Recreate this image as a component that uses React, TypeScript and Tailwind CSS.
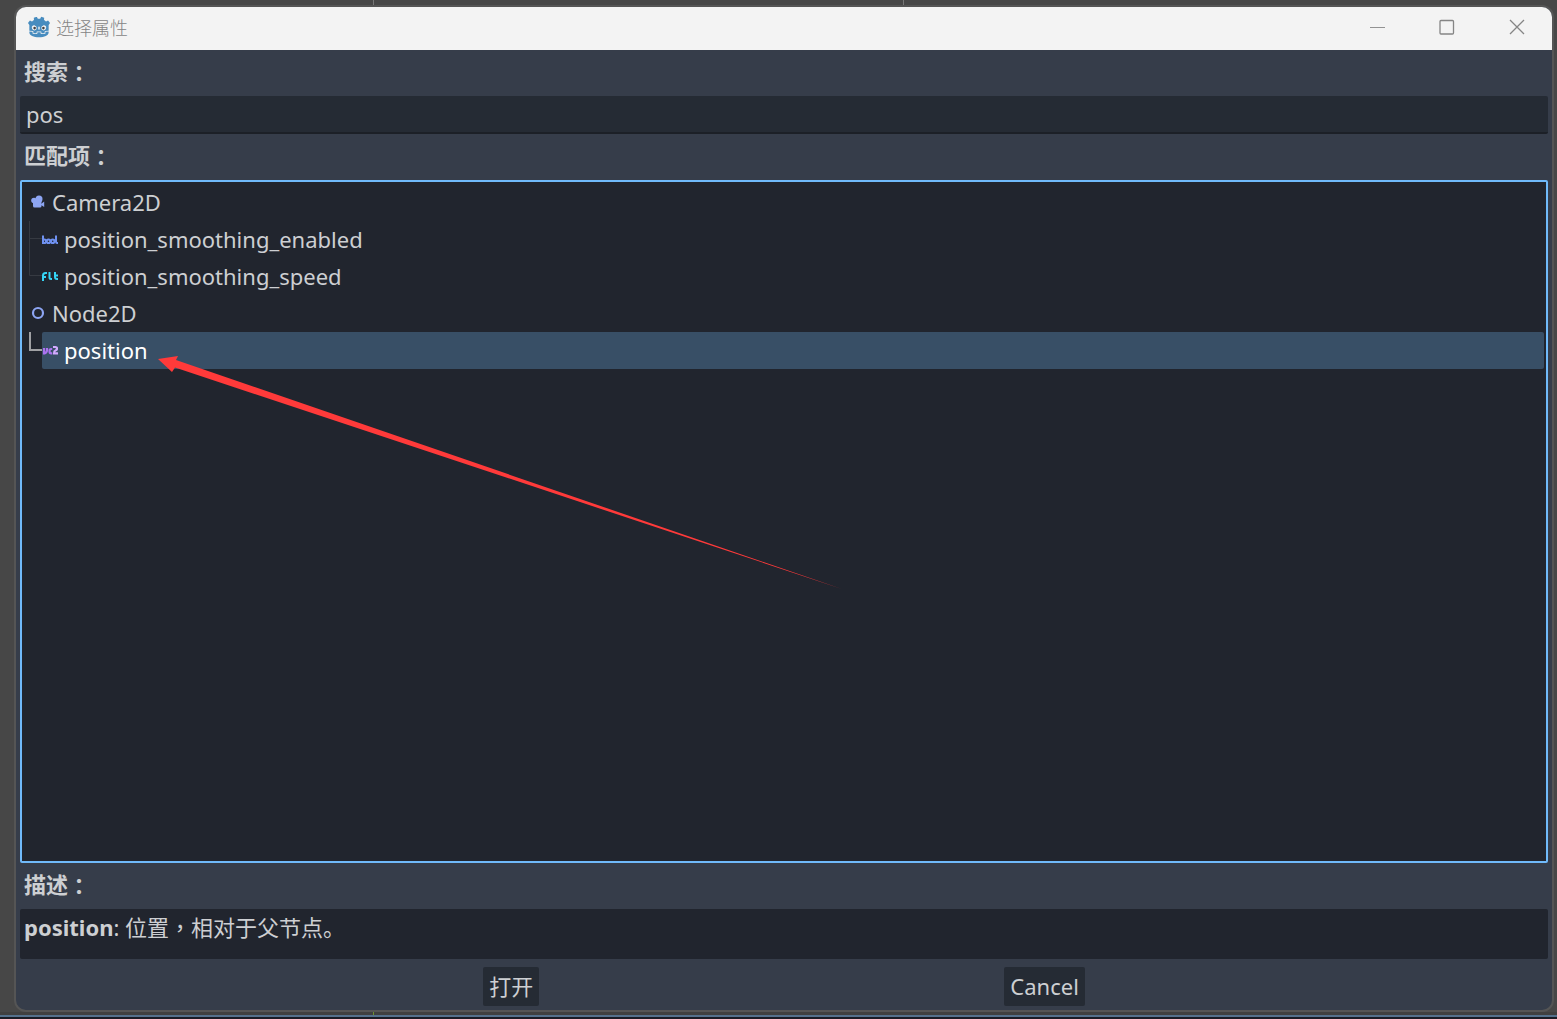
import { useState, type ReactNode } from "react";
import { SiGodotengine } from "react-icons/si";

function CameraIcon() {
  return (
    <svg width="16" height="16" viewBox="0 0 16 16" fill="#8da5f3" aria-hidden="true">
      <circle cx="9" cy="5" r="3.500" />
      <circle cx="4" cy="6.500" r="2.800" />
      <path d="M3 7h8.500v5q0 1.500-1.500 1.500H4.500Q3 13.500 3 12z" />
      <path d="M11 10l3.200-2.500v5.500L11 11z" />
    </svg>
  );
}

function Node2DIcon() {
  return (
    <svg width="16" height="16" viewBox="0 0 16 16" fill="none" stroke="#8da5f3" strokeWidth="2.200" aria-hidden="true">
      <circle cx="8" cy="8" r="5" />
    </svg>
  );
}

function BoolIcon() {
  return (
    <svg width="16" height="16" viewBox="0 0 16 16" fill="none" stroke="#6f91f0" strokeWidth="2" aria-hidden="true">
      <path d="M1 4.500V13M1 8.500h1.300a1.800 1.800 0 0 1 0 3.600H1" />
      <circle cx="6.500" cy="10.300" r="1.800" />
      <circle cx="10.700" cy="10.300" r="1.800" />
      <path d="M14 4.500V10.800q0 1.300 1.100 1.300H16" />
    </svg>
  );
}

function FloatIcon() {
  return (
    <svg width="16" height="16" viewBox="0 0 16 16" fill="none" stroke="#35d4f4" strokeWidth="2" aria-hidden="true">
      <path d="M5 5H3.500Q1 5 1 7.500V13M0 9h4" />
      <path d="M7.500 4v5.500Q7.500 11 9 11h1" />
      <path d="M13 4v5Q13 11 15 11h1M12 7.500h4" />
    </svg>
  );
}

function Vector2Icon() {
  return (
    <svg width="16" height="16" viewBox="0 0 16 16" fill="none" strokeWidth="2.200" aria-hidden="true">
      <path stroke="#ac73f1" d="M2 6v5.500h.5Q5 10.500 5 8V6M10.200 7H9.200Q7.500 7 7.500 9.200T9.200 11.400h1" />
      <path stroke="#d2aaff" d="M11 5h2.500Q15 5 15 6.500T13.500 8.500Q12 9 12 11.400h4" />
    </svg>
  );
}

function Label({ children, htmlFor }: { children: ReactNode; htmlFor?: string }) {
  return (
    <label htmlFor={htmlFor} className="flex h-[46px] shrink-0 items-center px-1 pb-1 font-bold">
      <span>{children}</span>
      <span className="font-['Noto_Sans_CJK_TC',sans-serif]">：</span>
    </label>
  );
}

function Item({ icon, name, child, selected }: { icon: ReactNode; name: string; child?: boolean; selected?: boolean }) {
  return (
    <button
      type="button"
      className={`flex h-[37px] w-full items-center gap-1.5 rounded-[2px] pb-0.5 text-left ${child ? "" : "pl-1.5"} ${
        selected ? "bg-[#384f66] text-white" : ""
      }`}
    >
      {icon}
      <span>{name}</span>
    </button>
  );
}

export default function App() {
  const [query, setQuery] = useState("pos");
  return (
    <div className="flex h-screen flex-col overflow-hidden bg-[#474747] font-['Noto_Sans','Noto_Sans_CJK_SC',sans-serif] text-[22px] leading-[30px] text-[#cdcfd2]">
      <div className="flex h-[5px] shrink-0">
        <div className="w-[374px] border-r border-[#777]" />
        <div className="w-[530px] border-r border-[#777]" />
      </div>
      <main className="relative mr-[3px] ml-3.5 flex min-h-0 flex-1 flex-col overflow-hidden rounded-xl border-2 border-[#555] bg-[#363d4a]">
        <header className="flex h-[43px] shrink-0 items-center bg-[#f3f3f3] pb-[3px] pl-3 text-[#858585]">
          <svg width="22" height="22" viewBox="0 0 24 24" aria-hidden="true">
            <path fill="#f3f3f3" d="M3 9h18v12H3z" />
            <SiGodotengine size={24} color="#478cbf" />
            <circle cx="7" cy="13.200" r="2.500" fill="#f3f3f3" />
            <circle cx="17" cy="13.200" r="2.500" fill="#f3f3f3" />
            <circle cx="7.200" cy="13.200" r="1.400" fill="#414042" />
            <circle cx="16.800" cy="13.200" r="1.400" fill="#414042" />
          </svg>
          <h1 className="ml-1.5 flex-1 font-['Noto_Sans_CJK_SC',sans-serif] text-lg leading-7 font-light">选择属性</h1>
          <button type="button" aria-label="最小化" className="flex h-full w-[70px] items-center justify-center">
            <svg width="16" height="16" stroke="#929292" aria-hidden="true"><path d="M1 8.500h15" /></svg>
          </button>
          <button type="button" aria-label="最大化" className="flex h-full w-[70px] items-center justify-center">
            <svg width="16" height="16" fill="none" stroke="#858585" strokeWidth="1.300" aria-hidden="true"><rect x="1" y="1.500" width="13.500" height="13.500" rx="1" /></svg>
          </button>
          <button type="button" aria-label="关闭" className="flex h-full w-[70px] items-center justify-center">
            <svg width="16" height="16" stroke="#858585" strokeWidth="1.300" aria-hidden="true"><path d="M1 1l14 14M15 1L1 15" /></svg>
          </button>
        </header>

        <div className="flex min-h-0 flex-1 flex-col px-1">
          <Label htmlFor="search">搜索</Label>
          <input
            id="search"
            value={query}
            onChange={(e) => setQuery(e.target.value)}
            className="h-[38px] w-full shrink-0 rounded-[2px] border-b-2 border-[#1c2027] bg-[#252b34] px-1.5 outline-none"
          />
          <Label>匹配项</Label>
          <section aria-label="匹配项" className="min-h-0 flex-1 rounded-[2px] border-2 border-[#70bafa] bg-[#21252e] p-0.5">
            <Item icon={<CameraIcon />} name="Camera2D" />
            <div className="flex">
              <svg className="shrink-0" width="18" height="74" fill="none" stroke="#363a42" aria-hidden="true">
                <path d="M5.500 0v54.500H18M5.500 17.500H18" />
              </svg>
              <div className="flex-1">
                <Item child icon={<BoolIcon />} name="position_smoothing_enabled" />
                <Item child icon={<FloatIcon />} name="position_smoothing_speed" />
              </div>
            </div>
            <Item icon={<Node2DIcon />} name="Node2D" />
            <div className="flex">
              <svg className="shrink-0" width="18" height="37" fill="none" stroke="#a0a1a4" strokeWidth="2" aria-hidden="true">
                <path d="M6 0v18h12" />
              </svg>
              <div className="flex-1">
                <Item child selected icon={<Vector2Icon />} name="position" />
              </div>
            </div>
          </section>
          <Label>描述</Label>
          <p className="h-[50px] shrink-0 rounded-[2px] bg-[#21252e] px-1 pt-0.5">
            <strong>position</strong>: 位置<span className="font-['Noto_Sans_CJK_TC',sans-serif]">，</span>相对于父节点。
          </p>
          <footer className="flex shrink-0 justify-evenly pt-2 pb-1">
            <button type="button" className="mx-0.5 h-[39px] rounded-[2px] bg-[#252b34] px-1.5 pb-0.5">打开</button>
            <button type="button" className="mx-0.5 h-[39px] rounded-[2px] bg-[#252b34] px-1.5 pb-0.5">Cancel</button>
          </footer>
        </div>

        <svg className="pointer-events-none absolute top-[349px] left-[142px]" width="686" height="236" aria-hidden="true">
          <path fill="#ff3a3a" d="M0 3L20 0 18 4 684 233 17 11.500 14 16z" />
        </svg>
      </main>
      <div className="h-[3px] shrink-0 bg-[#404040]">
        <div className="h-full w-[374px] border-r border-[#6d9130]" />
      </div>
      <div className="h-1 shrink-0 border-t-2 border-[#55718c] bg-[#1a1c26]" />
    </div>
  );
}
